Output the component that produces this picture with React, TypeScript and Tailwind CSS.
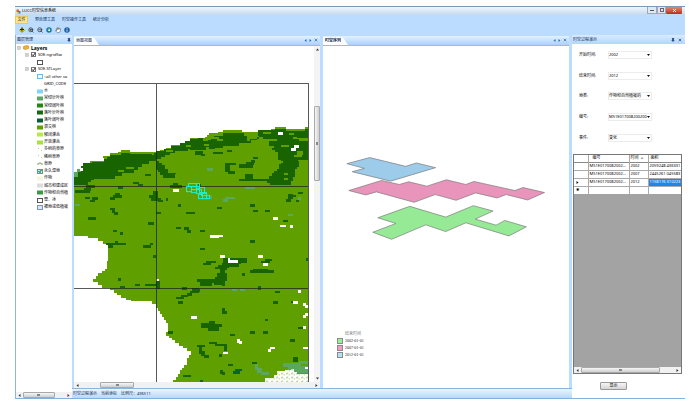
import React from 'react';
import { Hand, Pin, X, ZoomIn, ZoomOut } from 'lucide-react';

type Point = [number, number];
type Box = [number, number, number, number];

const CELL = 2.57;

// Turns an outline into a staircase, the way raster cells look when vectorised
const stairs = (points: Point[]) => {
  let d = `M${points[0][0]} ${points[0][1]}`;
  points.forEach(([x, y], i) => {
    const [nx, ny] = points[(i + 1) % points.length];
    const n = Math.max(1, Math.round(Math.min(Math.abs(nx - x), Math.abs(ny - y)) / CELL));
    for (let s = 1; s <= n; s++) {
      d += `H${(x + ((nx - x) * s) / n).toFixed(1)}V${(y + ((ny - y) * s) / n).toFixed(1)}`;
    }
  });
  return d + 'Z';
};

const LAND: Point[] = [
  [74, 173], [79, 168], [83, 163], [90, 161], [104, 158], [103, 156], [110, 153], [118, 152], [121, 150],
  [130, 150], [130, 152], [152, 152], [160, 150], [171, 145], [181, 143], [190, 138], [204, 137], [208, 133],
  [217, 132], [222, 130], [241, 130], [241, 132], [257, 132], [257, 130], [270, 129], [274, 127], [285, 129],
  [304, 127], [307, 129], [307, 381], [166, 381], [173, 379], [180, 369], [184, 364], [187, 357], [191, 350],
  [187, 347], [175, 339], [169, 335], [166, 331], [168, 327], [168, 322], [164, 316], [160, 310], [156, 303],
  [152, 300], [131, 299], [121, 294], [110, 287], [102, 284], [93, 278], [98, 272], [105, 268], [107, 260],
  [108, 243], [98, 237], [88, 235], [74, 233],
];

const FOREST: Point[][] = [
  [
    [74, 174], [79, 168], [83, 163], [92, 162], [104, 159], [110, 155], [121, 153], [130, 154], [152, 155],
    [156, 151], [171, 146], [180, 143], [190, 139], [197, 138], [202, 141], [194, 147], [188, 151], [175, 153],
    [165, 157], [156, 161], [142, 166], [134, 172], [122, 175], [115, 178], [106, 178], [94, 179], [88, 184], [74, 187],
  ],
  [[222, 133], [241, 133], [246, 138], [246, 143], [238, 146], [222, 148], [210, 147], [205, 150], [190, 152], [190, 141], [207, 140], [213, 136]],
  [[257, 130], [274, 129], [285, 131], [304, 129], [307, 133], [307, 138], [296, 137], [288, 141], [276, 139], [262, 137], [250, 143], [240, 141], [258, 136]],
  [[276, 139], [298, 137], [298, 141], [307, 144], [307, 160], [297, 161], [298, 166], [296, 168], [294, 176], [290, 184], [272, 184], [266, 180], [240, 180], [238, 178], [268, 175], [276, 168], [280, 160], [277, 152], [271, 148]],
  [[222, 257], [246, 257], [246, 262], [240, 263], [238, 266], [228, 267], [224, 272], [226, 280], [224, 284], [215, 284], [213, 281], [196, 281], [196, 278], [214, 276], [219, 268], [214, 266], [221, 262]],
  [[200, 322], [208, 320], [214, 318], [214, 323], [221, 326], [218, 330], [202, 330], [207, 327], [200, 325]],
  [[156, 161], [162, 165], [168, 172], [176, 173], [175, 177], [166, 177], [160, 171], [156, 167]],
];

const FOREST_PATCHES: Box[] = [
  [145, 173, 6, 2], [133, 181, 6, 2], [138, 183, 5, 2], [86, 184, 9, 3], [84, 187, 7, 3], [75, 189, 15, 3], [118, 185, 5, 3],
  [85, 196, 5, 2], [92, 196, 6, 3], [90, 199, 5, 2], [115, 192, 5, 3], [113, 194, 9, 3], [110, 196, 5, 3],
  [153, 190, 5, 4], [149, 194, 9, 3], [151, 197, 10, 3], [158, 199, 5, 2], [166, 197, 2, 3], [173, 182, 5, 2], [170, 184, 12, 3],
  [110, 207, 5, 2], [112, 209, 3, 3], [114, 211, 4, 3], [88, 216, 8, 3], [156, 211, 5, 2], [186, 211, 8, 2], [148, 221, 6, 3],
  [178, 203, 3, 3], [113, 229, 4, 2], [120, 231, 3, 3], [176, 226, 5, 2], [184, 226, 5, 3], [187, 229, 4, 3],
  [106, 242, 20, 2], [108, 244, 5, 3], [115, 240, 3, 3], [150, 242, 3, 2], [143, 244, 8, 3], [153, 254, 3, 3],
  [118, 277, 3, 3], [135, 283, 5, 2], [145, 283, 12, 2], [120, 285, 5, 2], [156, 280, 4, 8], [182, 286, 5, 3],
  [216, 206, 5, 2], [249, 203, 5, 3], [252, 209, 5, 2], [264, 209, 5, 2], [287, 193, 5, 5], [285, 198, 5, 3], [290, 194, 5, 2],
  [297, 191, 5, 2], [295, 199, 3, 2], [282, 219, 5, 2], [199, 229, 5, 2], [249, 239, 5, 3], [199, 247, 5, 2], [190, 211, 4, 2],
  [205, 260, 10, 2], [202, 262, 8, 2], [252, 268, 15, 3], [249, 269, 24, 3], [264, 258, 7, 2], [260, 260, 9, 2], [241, 272, 3, 3],
  [257, 285, 3, 3], [305, 257, 2, 3], [224, 163, 5, 8], [227, 170, 7, 3], [238, 164, 14, 3], [245, 162, 8, 3], [250, 160, 4, 3],
  [244, 173, 8, 5], [197, 183, 3, 3], [225, 163, 10, 2], [199, 281, 12, 4], [208, 279, 14, 3], [221, 280, 3, 5],
  [196, 288, 3, 3], [190, 290, 8, 2], [187, 292, 5, 3], [181, 294, 7, 2], [176, 296, 8, 2], [178, 300, 5, 3], [192, 287, 6, 3],
  [221, 307, 3, 6], [223, 310, 3, 3], [274, 290, 5, 2], [272, 300, 5, 3], [290, 300, 3, 2], [264, 318, 3, 2], [297, 326, 5, 2],
  [249, 330, 5, 3], [262, 330, 5, 3], [229, 333, 5, 2], [168, 330, 5, 3], [289, 338, 5, 3], [196, 344, 8, 2], [208, 341, 8, 2],
  [214, 343, 12, 2], [223, 345, 3, 5], [198, 346, 3, 7], [200, 350, 4, 5], [203, 354, 5, 3], [218, 353, 3, 3], [227, 363, 5, 2],
  [219, 369, 3, 4], [221, 371, 3, 3], [183, 374, 8, 2], [199, 379, 3, 2], [251, 361, 5, 2], [292, 356, 5, 5], [257, 287, 3, 2],
  [208, 147, 6, 2], [212, 152, 10, 2], [194, 151, 8, 4], [200, 154, 4, 2], [252, 157, 5, 2], [268, 141, 8, 5], [226, 150, 5, 2],
];

const CLEARINGS: Box[] = [
  [160, 159, 4, 2], [166, 150, 7, 2], [186, 145, 5, 2], [262, 132, 8, 2], [288, 133, 5, 2], [280, 145, 8, 2],
  [296, 151, 6, 4], [276, 161, 6, 2], [203, 144, 5, 2], [216, 139, 6, 2], [126, 166, 8, 2], [118, 169, 6, 2], [283, 172, 4, 2],
  [210, 137, 8, 2], [293, 155, 8, 2], [283, 177, 4, 2],
];

const BARE: Box[] = [
  [173, 188, 6, 3], [277, 132, 5, 3], [293, 145, 5, 3], [290, 148, 5, 3], [80, 167, 3, 3], [272, 216, 5, 3], [279, 224, 6, 2],
  [289, 224, 3, 3], [209, 234, 9, 3], [218, 234, 4, 2], [219, 254, 5, 3], [227, 257, 2, 5], [229, 259, 8, 3], [257, 254, 5, 3],
  [262, 262, 5, 3], [156, 278, 3, 2], [297, 289, 3, 3], [292, 300, 5, 3], [302, 302, 3, 3], [304, 304, 3, 3], [191, 315, 5, 3],
  [302, 314, 3, 3], [304, 312, 3, 3], [302, 325, 3, 3], [236, 338, 3, 4], [238, 340, 3, 3], [222, 351, 5, 2], [269, 346, 5, 2],
  [267, 348, 3, 3], [302, 346, 5, 2], [304, 366, 3, 2],
];

const WETLAND: Box[] = [
  [74, 171, 4, 5], [77, 168, 4, 3], [75, 203, 5, 2], [206, 167, 6, 3], [244, 186, 10, 2], [224, 196, 10, 2], [222, 198, 5, 3],
  [287, 213, 5, 2], [208, 194, 3, 4], [231, 288, 5, 2], [239, 288, 5, 2], [254, 363, 3, 6], [256, 367, 5, 5], [260, 371, 8, 3],
  [282, 362, 18, 4], [287, 365, 20, 7], [298, 360, 9, 3], [297, 196, 3, 3],
];

const SELECTED: Box[] = [
  [188, 183, 8, 3], [186, 186, 5, 5], [191, 186, 8, 3], [191, 189, 5, 3], [196, 183, 3, 5], [196, 189, 5, 4], [199, 187, 5, 5],
  [201, 192, 5, 3], [198, 194, 4, 4], [202, 193, 4, 5], [206, 195, 3, 3],
];

const STIPPLE: Point[] = [
  [264, 377], [270, 377], [273, 374], [276, 370], [284, 369], [290, 368], [296, 373], [307, 373], [307, 381], [264, 381],
];

const layerClasses = [
  { name: '水', color: '#7fd4f7' },
  { name: '常绿针叶林', color: '#5aa868' },
  { name: '常绿阔叶林', color: '#228a10' },
  { name: '落叶针叶林', color: '#146a10' },
  { name: '落叶阔叶林', color: '#0a5c38' },
  { name: '混交林', color: '#62a000' },
  { name: '郁闭灌丛', color: '#b8ea44' },
  { name: '开放灌丛', color: '#a8e03c' },
  { name: '多树的草原', color: 'dots' },
  { name: '稀树草原', color: 'dots' },
  { name: '草原', color: 'grass' },
  { name: '永久湿地', color: 'marsh' },
  { name: '作物', color: '#f6f6e0' },
  { name: '城市和建成区', color: '#dcdcdc' },
  { name: '作物和自然植', color: '#3c9848' },
  { name: '雪、冰', color: 'outline' },
  { name: '裸地或低植被', color: 'bare' },
];

const fields = [
  { id: 'start', label: '开始时间:', value: '2002' },
  { id: 'end', label: '结束时间:', value: '2012' },
  { id: 'kind', label: '地类:', value: '作物和自然植被的' },
  { id: 'code', label: '编号:', value: 'M51E017008200200' },
  { id: 'event', label: '事件:', value: '变化' },
];

const rows = [
  { code: 'M51E0170082002...', year: '2002', area: '2059248 436331' },
  { code: 'M51E0170082002...', year: '2007', area: '2445261 045583' },
  { code: 'M51E0170082002...', year: '2012', area: '1158176 310223' },
];

const series = [
  { date: '2002-01-01', swatch: 'bg-[#98f098]' },
  { date: '2007-01-01', swatch: 'bg-[#f39cc4]' },
  { date: '2012-01-01', swatch: 'bg-[#b4e0fa]' },
];

const Patches = ({ boxes, fill }: { boxes: Box[]; fill: string }) => (
  <g fill={fill}>
    {boxes.map(([x, y, w, h], i) => (
      <rect key={i} x={x} y={y} width={w} height={h} />
    ))}
  </g>
);

const Swatch = ({ color }: { color: string }) => (
  <svg className="h-[5px] w-[6px] shrink-0" viewBox="0 0 6 5">
    {color.startsWith('#') && <rect y="0.5" width="6" height="4" fill={color} />}
    {color === 'dots' && <path d="M1 1h1v1H1zM4 3h1v1H4z" fill="#b9c7a0" />}
    {color === 'grass' && <path d="M0 3h2V2h2v1h2" stroke="#7da870" fill="none" />}
    {color === 'marsh' && (
      <>
        <rect width="6" height="5" fill="#4ca886" />
        <path d="M1 1h2v1H1zM4 2h1v2H4zM1 3h1v1H1z" fill="#bfe6ff" />
      </>
    )}
    {color === 'outline' && <rect x="0.5" y="0.5" width="5" height="4" fill="#fff" stroke="#555" />}
    {color === 'bare' && <rect x="0.5" y="0.5" width="5" height="4" fill="#d8e6fa" stroke="#7d95bd" />}
    {color === 'frame' && <rect x="0.5" y="0.5" width="5" height="4" fill="#eef8ff" stroke="#7cb4dc" />}
  </svg>
);

const Expander = () => (
  <svg className="size-[4px] shrink-0" viewBox="0 0 4 4">
    <rect x="0.5" y="0.5" width="3" height="3" fill="#fff" stroke="#b0b0b0" strokeWidth="0.6" />
    <path d="M1 2h2" stroke="#666" strokeWidth="0.6" />
  </svg>
);

const LayerCheck = ({ id, label }: { id: string; label: string }) => (
  <>
    <span className="relative flex size-[5px] shrink-0">
      <input
        id={id}
        type="checkbox"
        defaultChecked
        className="peer size-[5px] appearance-none border border-[#777] bg-white"
      />
      <svg className="pointer-events-none absolute inset-0 hidden peer-checked:block" viewBox="0 0 5 5">
        <path d="M1 2.4L2.2 3.8L4.2 1" stroke="#111" strokeWidth="0.9" fill="none" />
      </svg>
    </span>
    <label htmlFor={id}>{label}</label>
  </>
);

const HScroll = ({ offset, thumb }: { offset: string; thumb: string }) => (
  <div className="flex h-[6px] shrink-0 items-center justify-between bg-[#f1f1f1] px-[2px]">
    <svg className="size-[3px]" viewBox="0 0 3 3"><path d="M2.5 0v3L0.5 1.5z" fill="#333" /></svg>
    <div className="flex h-full flex-1 px-[2px]">
      <div className={`flex h-full items-center justify-center rounded-[1px] border border-[#a9a9a9] bg-linear-to-b from-[#f6f6f6] to-[#cfcfcf] ${offset} ${thumb}`}>
        <span className="h-[2px] w-[3px] bg-[#888]" />
      </div>
    </div>
    <svg className="size-[3px]" viewBox="0 0 3 3"><path d="M0.5 0v3L2.5 1.5z" fill="#333" /></svg>
  </div>
);

const TabStrip = ({ title, bold }: { title: string; bold?: boolean }) => (
  <div className="flex h-[9px] items-end justify-between bg-linear-to-b from-[#e4f1ff] to-[#a9d1fb] pt-px">
    <div className="flex h-full items-stretch">
      <button className={`bg-white pl-[2px] text-[#0c2850] ${bold ? 'font-bold' : ''}`}>{title}</button>
      <svg className="h-full w-[7px]" viewBox="0 0 7 8" preserveAspectRatio="none">
        <path d="M0 0C2 0 3 2 7 8H0Z" fill="#fff" />
      </svg>
    </div>
    <div className="flex h-full items-center gap-[2px] pr-[2px] pb-[2px]">
      <svg className="size-[3px]" viewBox="0 0 3 3"><path d="M2.5 0v3L0.5 1.5z" fill="#2f6fb5" /></svg>
      <svg className="size-[3px]" viewBox="0 0 3 3"><path d="M0.5 0v3L2.5 1.5z" fill="#2f6fb5" /></svg>
      <X className="size-[4px] text-[#1f5fa8]" strokeWidth={4} />
    </div>
  </div>
);

const LandCoverMap = () => (
  <svg className="min-h-0 w-full flex-1" viewBox="74 46 239 335" preserveAspectRatio="xMinYMin slice">
    <defs>
      <pattern id="stipple" width="5" height="4" patternUnits="userSpaceOnUse">
        <rect width="5" height="4" fill="#fff" />
        <path d="M0 0h2v1H0zM3 1h1v1H3zM1 3h1v1H1z" fill="#a8c880" />
      </pattern>
    </defs>
    <g shapeRendering="crispEdges">
      <path d={stairs(LAND)} fill="#609f00" />
      {FOREST.map((area, i) => (
        <path key={i} d={stairs(area)} fill="#186400" />
      ))}
      <Patches boxes={FOREST_PATCHES} fill="#186400" />
      <Patches boxes={CLEARINGS} fill="#609f00" />
      <Patches boxes={WETLAND} fill="#5aa860" />
      <Patches boxes={BARE} fill="#ffffff" />
      <path d="M234 368h7v2h-2v3h-7v-3h2z" fill="#0a6238" />
      <path d={stairs(STIPPLE)} fill="url(#stipple)" />
      <path d="M74 83.5H307.5V381M156.5 83V381M74 185.5H307M74 287.5H307" stroke="#222" strokeOpacity="0.75" fill="none" />
    </g>
    <g fill="none" stroke="#18f0dc" strokeWidth="1">
      {SELECTED.map(([x, y, w, h], i) => (
        <rect key={i} x={x} y={y} width={w} height={h} />
      ))}
    </g>
  </svg>
);

const SeriesView = () => (
  <svg className="min-h-0 w-full flex-1" viewBox="323 46 245 282" preserveAspectRatio="xMinYMin slice">
    <g transform="translate(320 140) scale(0.3333)" stroke="#777" strokeWidth="2">
      <path d="M80 68L148 50L255 76L287 66L344 80L210 120L96 92L132 82Z" fill="#9dcbea" />
      <path
        d="M86 148L183 118L236 130L264 122L318 135L376 116L434 130L458 121L580 148L604 139L668 154L618 176L554 160L527 170L463 155L405 177L343 160L280 183L168 152L136 161Z"
        fill="#e994ba"
      />
      <path
        d="M172 229L267 195L374 227L456 193L515 209L462 233L524 251L550 237L614 256L562 283L434 244L374 270L315 250L213 293L157 272L226 246Z"
        fill="#96ea96"
      />
    </g>
  </svg>
);

const Toolbar = () => (
  <div className="flex h-[11px] items-center gap-[3px] pl-[4px]">
    <button aria-label="添加数据">
      <svg className="size-[6px]" viewBox="0 0 12 12">
        <path d="M6 1L11 7L6 11L1 7Z" fill="#f7d21c" stroke="#9a7a10" />
        <path d="M6 1v8M2 5h8" stroke="#222" strokeWidth="2" />
      </svg>
    </button>
    <button aria-label="放大"><ZoomIn className="size-[6px] text-[#333]" strokeWidth={3} /></button>
    <button aria-label="缩小"><ZoomOut className="size-[6px] text-[#333]" strokeWidth={3} /></button>
    <button aria-label="全图">
      <svg className="size-[6px]" viewBox="0 0 12 12">
        <circle cx="6" cy="6" r="5.5" fill="#1472c4" />
        <path d="M3 4L7 2L9 5L7 9L4 8Z" fill="#5cc04a" />
        <path d="M5 5h3v3H5z" fill="#fff" />
      </svg>
    </button>
    <button aria-label="平移"><Hand className="size-[6px] text-[#444]" fill="#fff" strokeWidth={2} /></button>
    <button aria-label="识别">
      <svg className="size-[6px]" viewBox="0 0 12 12">
        <circle cx="6" cy="6" r="5.5" fill="#1c5fa8" />
        <path d="M6 2.5v2M6 5.5v4" stroke="#fff" strokeWidth="1.6" />
      </svg>
    </button>
  </div>
);

const LayerPanel = () => (
  <aside className="flex w-[57px] shrink-0 flex-col border-l border-[#8fb4dc]">
    <div className="flex h-[9px] items-center justify-between bg-linear-to-b from-[#d9ebff] to-[#b3d6fc] px-px text-[#0c2850]">
      <h2>图层管理</h2>
      <Pin className="size-[4px] text-[#123a70]" fill="currentColor" strokeWidth={3} />
    </div>
    <div className="flex min-h-0 flex-1 flex-col bg-white">
      <ul className="grid h-[167px] auto-rows-fr items-center whitespace-nowrap">
        <li className="flex items-center gap-[2px] pl-px font-bold">
          <Expander />
          <svg className="h-[5px] w-[6px]" viewBox="0 0 12 10">
            <path d="M1 3L7 1L11 2V7L5 9L1 8Z" fill="#f0b030" stroke="#b87810" />
          </svg>
          <span className="text-[5px]">Layers</span>
        </li>
        <li className="flex items-center gap-[2px] pl-[9px]">
          <Expander />
          <LayerCheck id="layer-grid" label="SDE.ngrid5w" />
        </li>
        <li className="flex pl-[21px]"><Swatch color="outline" /></li>
        <li className="flex items-center gap-[2px] pl-[9px]">
          <Expander />
          <LayerCheck id="layer-st" label="SDE.STLayer" />
        </li>
        <li className="flex items-center gap-px pl-[21px]"><Swatch color="frame" />&lt;all other va</li>
        <li className="pl-[28px]">GRID_CODE</li>
        {layerClasses.map(({ name, color }) => (
          <li key={name} className="flex items-center gap-px pl-[21px]">
            <Swatch color={color} />
            {name}
          </li>
        ))}
      </ul>
    </div>
    <HScroll offset="ml-0" thumb="w-3/4" />
  </aside>
);

const ProcessPanel = () => (
  <aside className="flex w-[113px] shrink-0 flex-col bg-white">
    <div className="flex h-[9px] items-center justify-between bg-linear-to-b from-[#d9ebff] to-[#b3d6fc] pr-[3px] pl-px text-[#0c2850]">
      <h2>时空过程演示</h2>
      <div className="flex gap-[3px]">
        <Pin className="size-[4px] text-[#123a70]" fill="currentColor" strokeWidth={3} />
        <X className="size-[4px] text-[#123a70]" strokeWidth={4} />
      </div>
    </div>
    <form className="mt-px grid h-[103px] auto-rows-fr items-center pl-[7px]">
      {fields.map(({ id, label, value }) => (
        <div key={id} className="flex items-center">
          <label htmlFor={id} className="w-[29px]">{label}</label>
          <div className="relative w-[44px]">
            <select id={id} className="block h-[8px] w-full appearance-none border border-[#ececec] bg-white pr-[4px] leading-[6px]">
              <option>{value}</option>
            </select>
            <svg className="pointer-events-none absolute top-[3px] right-[2px] h-[2px] w-[3px]" viewBox="0 0 3 2">
              <path d="M0 0h3L1.5 2z" fill="#111" />
            </svg>
          </div>
        </div>
      ))}
    </form>
    <div className="mt-[6px] mr-[3px] ml-px flex min-h-0 flex-1 flex-col border border-[#777] bg-[#a3a3a3]">
      <table className="w-full table-fixed border-collapse bg-white text-left whitespace-nowrap">
        <colgroup>
          <col className="w-[14px]" />
          <col className="w-[41px]" />
          <col className="w-[19px]" />
          <col />
        </colgroup>
        <thead>
          <tr className="h-[7px] border-b border-[#888]">
            <th className="border-r border-[#aaa]" />
            <th className="border-r border-[#aaa] pl-[4px] font-normal">编号</th>
            <th className="border-r border-[#aaa] pl-px font-normal">时间&nbsp;&nbsp;▵</th>
            <th className="pl-[2px] font-normal">面积</th>
          </tr>
        </thead>
        <tbody>
          {rows.map(({ code, year, area }, i) => (
            <tr key={year} className="h-[8px] border-b border-[#aaa]">
              <td className="border-r border-[#aaa] pl-[2px]">
                {i === 2 && <svg className="size-[3px]" viewBox="0 0 3 3"><path d="M0.5 0v3L2.5 1.5z" fill="#111" /></svg>}
              </td>
              <td className="border-r border-[#aaa] pl-px">{code}</td>
              <td className="border-r border-[#aaa] pl-px">{year}</td>
              <td className={i === 2 ? 'bg-[#1c86ee] pl-px text-white' : 'pl-px'}>{area}</td>
            </tr>
          ))}
          <tr className="h-[8px]">
            <td className="border-r border-[#aaa] pl-[2px]">✱</td>
            <td className="border-r border-[#aaa]" />
            <td className="border-r border-[#aaa]" />
            <td />
          </tr>
        </tbody>
      </table>
      <div className="flex-1" />
      <HScroll offset="ml-0" thumb="w-[85%]" />
    </div>
    <div className="flex h-[24px] items-center pl-[28px]">
      <button className="h-[8px] w-[27px] rounded-[1px] border border-[#999] bg-linear-to-b from-[#f6f6f6] to-[#d4d4d4] leading-[6px]">
        显示
      </button>
    </div>
  </aside>
);

export default function App() {
  return (
    <div className="flex min-h-screen flex-col bg-white px-[15px] pt-[6px] pb-[14px] font-['Noto_Sans','Noto_Sans_CJK_SC',sans-serif] text-[4px] leading-[6px] text-black">
      <div className="flex flex-1 flex-col border-b border-[#86b0dc] bg-[#bbdcff]">
        <header className="flex h-[9px] items-start justify-between border-t border-[#7e97b4] bg-linear-to-b from-[#f0f6fc] to-[#c3d9ef] pr-[3px]">
          <div className="flex h-full items-center gap-px pl-px">
            <svg className="size-[5px]" viewBox="0 0 10 10">
              <path d="M1 1h5v5H1z" fill="#e8602c" />
              <path d="M4 4h5v5H4z" fill="#3c7cd0" />
              <path d="M2 6h4v3H2z" fill="#f4c030" />
            </svg>
            <h1>LUCC时空信息系统</h1>
          </div>
          <div className="flex h-[7px]">
            <button aria-label="最小化" className="flex w-[10px] items-center justify-center border border-t-0 border-[#9aabc0] bg-[#dfe9f4]">
              <span className="h-px w-[4px] bg-[#555]" />
            </button>
            <button aria-label="还原" className="flex w-[9px] items-center justify-center border border-t-0 border-[#9aabc0] bg-[#dfe9f4]">
              <span className="size-[4px] border border-[#666]" />
            </button>
            <button aria-label="关闭" className="flex w-[16px] items-center justify-center rounded-b-[1px] bg-linear-to-b from-[#dc8a78] to-[#b52c18] text-white">
              <X className="size-[5px]" strokeWidth={4} />
            </button>
          </div>
        </header>
        <nav className="flex h-[9px] items-center gap-[7px] text-[#0c2850]">
          <button className="h-[8px] w-[13px] border border-[#e8c860] bg-[#ffe48a]">文件</button>
          <button>预处理工具</button>
          <button>时空操作工具</button>
          <button>统计分析</button>
        </nav>
        <Toolbar />
        <div className="flex min-h-0 flex-1">
          <LayerPanel />
          <main className="flex min-w-0 flex-1 flex-col">
            <div className="flex min-h-0 flex-1 gap-[3px] pt-px pr-[3px] pl-[2px]">
              <section className="flex min-w-0 flex-1 flex-col">
                <TabStrip title="地图视图" />
                <div className="flex min-h-0 flex-1 flex-col border-t border-[#b5b5b5] bg-white">
                  <div className="flex min-h-0 flex-1">
                    <div className="flex min-w-0 flex-1 flex-col overflow-hidden">
                      <LandCoverMap />
                    </div>
                    <div className="flex w-[6px] flex-col items-center justify-between bg-[#f4f4f4] py-[2px]">
                      <svg className="size-[3px]" viewBox="0 0 3 3"><path d="M0 2.5h3L1.5 0.5z" fill="#333" /></svg>
                      <div className="flex h-[75px] w-full items-center justify-center rounded-[1px] border border-[#a9a9a9] bg-linear-to-r from-[#f6f6f6] to-[#cfcfcf]">
                        <span className="h-[3px] w-[2px] bg-[#888]" />
                      </div>
                      <div className="h-[87px]" />
                      <svg className="size-[3px]" viewBox="0 0 3 3"><path d="M0 0.5h3L1.5 2.5z" fill="#333" /></svg>
                    </div>
                  </div>
                  <HScroll offset="ml-[19px]" thumb="w-[34px]" />
                </div>
              </section>
              <section className="flex min-w-0 flex-1 flex-col">
                <TabStrip title="时空序列" bold />
                <div className="flex min-h-0 flex-1 flex-col border-t border-[#b5b5b5] bg-white">
                  <SeriesView />
                  <div className="flex h-[58px] flex-col gap-px pt-px pl-[14px] font-['Liberation_Serif','Noto_Sans_CJK_SC',serif] text-[#222]">
                    <h3 className="pl-[8px] text-[#777]">结束时间</h3>
                    <ul className="flex flex-col gap-px">
                      {series.map(({ date, swatch }) => (
                        <li key={date} className="flex items-center gap-[2px]">
                          <span className={`size-[6px] border border-[#8a8a8a] ${swatch}`} />
                          {date}
                        </li>
                      ))}
                    </ul>
                  </div>
                </div>
              </section>
            </div>
            <footer className="flex h-[10px] items-center gap-[4px] border-t border-[#8fb4dc] bg-linear-to-b from-[#e9f5ff] to-[#b4dafd] pl-px text-[#0c2850]">
              <span>时空过程演示</span>
              <span>当前坐标</span>
              <span>比例尺：496511</span>
            </footer>
          </main>
          <ProcessPanel />
        </div>
      </div>
    </div>
  );
}
